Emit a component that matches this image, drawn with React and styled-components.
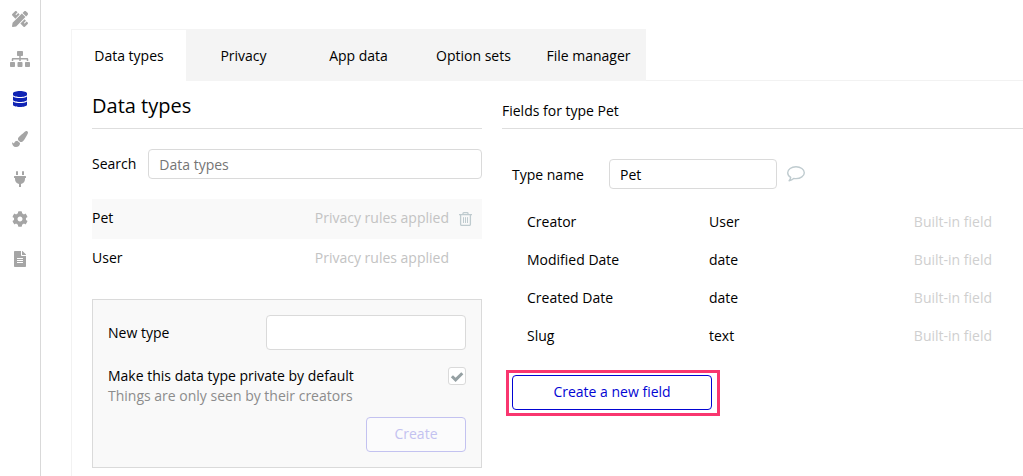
import React, { useState } from "react";
import styled, { createGlobalStyle } from "styled-components";
import { FaPencilRuler, FaSitemap, FaDatabase, FaPaintBrush, FaPlug, FaCog, FaFileAlt } from "react-icons/fa";

const GlobalStyle = createGlobalStyle`
  *, *::before, *::after { box-sizing: border-box; }
  body {
    margin: 0;
    background: #fff;
    color: #000;
    font: 14px/20px "Open Sans", "Noto Sans", sans-serif;
  }
  button, input { font: inherit; color: inherit; }
`;

const Page = styled.div`
  display: flex;
  min-height: 100vh;
  overflow-x: hidden;
`;

const Sidebar = styled.nav`
  display: flex;
  flex: none;
  flex-direction: column;
  width: 41px;
  border-right: 1px solid #d9d9d9;
`;

const SidebarButton = styled.button`
  display: flex;
  align-items: center;
  justify-content: center;
  height: 40px;
  padding: 0 0 2px;
  border: 0;
  background: none;
  color: ${(p) => (p.$active ? "#0f23b4" : "#a5a5a5")};
  cursor: pointer;

  svg {
    width: ${(p) => (p.$wide ? "20px" : "16px")};
    height: 16px;
  }
`;

const Main = styled.main`
  display: flex;
  flex: 1;
  flex-direction: column;
  min-width: 0;
  padding: 29px 0 0 30px;
`;

const TabBar = styled.div`
  display: flex;
  border-bottom: 1px solid #f2f2f2;
`;

const Tab = styled.button`
  width: 115px;
  height: 52px;
  margin-bottom: -1px;
  padding: 0;
  border: 1px solid #f4f4f4;
  border-width: 1px 0 0 ${(p) => (p.$active ? "1px" : "0")};
  background: ${(p) => (p.$active ? "#fff" : "#f4f4f4")};
  white-space: nowrap;
  cursor: pointer;
`;

const Panel = styled.div`
  display: grid;
  flex: 1;
  grid-template-columns: 390px minmax(0, 1fr);
  column-gap: 20px;
  padding-left: 20px;
  border-left: 1px solid #f2f2f2;
`;

const Column = styled.section`
  display: flex;
  flex-direction: column;
  padding-bottom: 8px;
`;

const ColumnHeader = styled.header`
  display: flex;
  align-items: flex-end;
  height: 48px;
  padding-bottom: ${(p) => (p.$large ? "8px" : "7px")};
  border-bottom: 1px solid #dedede;
`;

const Title = styled.h1`
  margin: 0;
  font-size: 20px;
  line-height: 28px;
  font-weight: 400;
`;

const Subtitle = styled.h2`
  margin: 0;
  font-size: 14px;
  line-height: 20px;
  font-weight: 400;
`;

const TextInput = styled.input`
  flex: ${(p) => (p.$width ? "none" : "1")};
  width: ${(p) => p.$width || "auto"};
  min-width: 0;
  height: ${(p) => (p.$tall ? "35px" : "30px")};
  padding: 0 10px;
  border: 1px solid #dadada;
  border-radius: 4px;
  background: #fff;
  outline: none;

  &::placeholder { color: #757575; opacity: 1; }
`;

const SearchRow = styled.div`
  display: flex;
  align-items: center;
  gap: 12px;
  margin: 20px 0;
`;

const TypeRow = styled.div`
  display: flex;
  align-items: center;
  height: 40px;
  padding: 0 10px 2px 0;
  background: ${(p) => (p.$selected ? "#f9f9f9" : "#fff")};
`;

const PrivacyNote = styled.span`
  margin-left: auto;
  margin-right: 10px;
  color: #c3c3c3;
`;

const IconButton = styled.button`
  display: flex;
  width: 13px;
  padding: 2px 0 0;
  border: 0;
  background: none;
  color: #bfcbcf;
  cursor: pointer;
  visibility: ${(p) => (p.$hidden ? "hidden" : "visible")};
`;

const NewTypeCard = styled.form`
  display: flex;
  flex-direction: column;
  margin-top: 20px;
  padding: 15px;
  border: 1px solid #dadada;
  background: #f9f9f9;
`;

const FormRow = styled.div`
  display: flex;
  align-items: ${(p) => (p.$top ? "flex-start" : "center")};
  justify-content: space-between;
  margin-top: ${(p) => (p.$top ? "16px" : "0")};
`;

const Hint = styled.span`
  display: block;
  color: #8c8c8c;
`;

const CheckHolder = styled.span`
  position: relative;
  display: flex;
  margin-top: 1px;

  svg {
    position: absolute;
    inset: 0;
    pointer-events: none;
  }
`;

const Checkbox = styled.input`
  width: 18px;
  height: 18px;
  margin: 0;
  appearance: none;
  border: 1px solid #dadada;
  border-radius: 3px;
  background: #fff;
`;

const OutlineButton = styled.button`
  width: ${(p) => p.$width};
  height: 35px;
  padding: 0 0 2px;
  border: 1px solid #0205d3;
  border-radius: 4px;
  background: #fff;
  color: #0205d3;
  cursor: pointer;

  &:disabled {
    align-self: flex-end;
    margin-top: 11px;
    border-color: #c3c2f0;
    background: #fbfbfc;
    color: #c3c2f0;
  }
`;

const TypeNameRow = styled.div`
  display: flex;
  align-items: center;
  gap: 10px;
  margin-top: 30px;
  padding-left: 10px;
`;

const TypeNameLabel = styled.label`
  width: 87px;
  padding-top: 2px;
`;

const CommentButton = styled(IconButton)`
  width: 18px;
  padding: 0;
`;

const FieldTable = styled.table`
  width: calc(100% - 56px);
  margin: 14px 31px 0 25px;
  border-collapse: collapse;
`;

const Cell = styled.td`
  width: ${(p) => p.$width || "auto"};
  height: 38px;
  padding: 0;
  color: ${(p) => (p.$muted ? "#cfcfcf" : "#000")};
  text-align: ${(p) => (p.$muted ? "right" : "left")};
`;

const Highlight = styled.div`
  display: flex;
  align-self: flex-start;
  margin: 15px 0 0 4px;
  padding: 2px 5px 3px 3px;
  border: 3px solid #f9366f;
`;

const TrashIcon = () => (
  <svg width="13" height="14" viewBox="0 0 13 14" fill="none" stroke="currentColor" aria-hidden="true">
    <path d="M0 2.6h13M4 2.4V1.5Q4 .7 4.800.7h3.400q.8 0 .8.8v.9M1.600 2.700v9.500q0 1.200 1.200 1.200h7.400q1.200 0 1.200-1.200V2.700" strokeWidth="1.300" />
    <path d="M4.500 5.200v5.800M6.500 5.200v5.800M8.500 5.200v5.800" />
  </svg>
);

const CommentIcon = () => (
  <svg width="18" height="16" viewBox="0 0 18 16" fill="none" stroke="currentColor" strokeWidth="1.4" strokeLinejoin="round" aria-hidden="true">
    <path d="M9 .8c4.600 0 8.300 2.600 8.300 5.900s-3.700 5.900-8.300 5.900c-.8 0-1.600-.1-2.300-.2-1.300 1.300-2.800 2-4.600 2.300 1-1 1.500-2 1.600-3.300C1.900 10.300.7 8.600.7 6.700.7 3.400 4.400.8 9 .8z" />
  </svg>
);

const CheckIcon = () => (
  <svg width="18" height="18" viewBox="0 0 18 18" fill="none" stroke="#95a0a3" strokeWidth="3" aria-hidden="true">
    <path d="M3.900 9.200l3.700 3.700 6.700-6.700" />
  </svg>
);

const NAV = [
  { label: "Design", Icon: FaPencilRuler },
  { label: "Workflow", Icon: FaSitemap, wide: true },
  { label: "Data", Icon: FaDatabase, active: true },
  { label: "Styles", Icon: FaPaintBrush },
  { label: "Plugins", Icon: FaPlug },
  { label: "Settings", Icon: FaCog },
  { label: "Logs", Icon: FaFileAlt },
];

const TABS = ["Data types", "Privacy", "App data", "Option sets", "File manager"];

const FIELDS = [
  ["Creator", "User"],
  ["Modified Date", "date"],
  ["Created Date", "date"],
  ["Slug", "text"],
];

export default function App() {
  const [typeName, setTypeName] = useState("Pet");

  return (
    <>
      <GlobalStyle />
      <Page>
        <Sidebar>
          {NAV.map(({ label, Icon, active, wide }) => (
            <SidebarButton key={label} type="button" aria-label={label} $active={active} $wide={wide}>
              <Icon />
            </SidebarButton>
          ))}
        </Sidebar>
        <Main>
          <TabBar role="tablist">
            {TABS.map((tab, i) => (
              <Tab key={tab} type="button" role="tab" aria-selected={i === 0} $active={i === 0}>
                {tab}
              </Tab>
            ))}
          </TabBar>
          <Panel>
            <Column>
              <ColumnHeader $large>
                <Title>Data types</Title>
              </ColumnHeader>
              <SearchRow>
                <label htmlFor="search">Search</label>
                <TextInput id="search" placeholder="Data types" />
              </SearchRow>
              {["Pet", "User"].map((name, i) => (
                <TypeRow key={name} $selected={i === 0}>
                  {name}
                  <PrivacyNote>Privacy rules applied</PrivacyNote>
                  <IconButton type="button" aria-label={`Delete ${name}`} $hidden={i !== 0}>
                    <TrashIcon />
                  </IconButton>
                </TypeRow>
              ))}
              <NewTypeCard>
                <FormRow>
                  <label htmlFor="new-type">New type</label>
                  <TextInput id="new-type" $width="200px" $tall />
                </FormRow>
                <FormRow $top>
                  <label htmlFor="private">
                    Make this data type private by default
                    <Hint>Things are only seen by their creators</Hint>
                  </label>
                  <CheckHolder>
                    <Checkbox id="private" type="checkbox" defaultChecked />
                    <CheckIcon />
                  </CheckHolder>
                </FormRow>
                <OutlineButton type="submit" $width="100px" disabled>
                  Create
                </OutlineButton>
              </NewTypeCard>
            </Column>
            <Column>
              <ColumnHeader>
                <Subtitle>Fields for type Pet</Subtitle>
              </ColumnHeader>
              <TypeNameRow>
                <TypeNameLabel htmlFor="type-name">Type name</TypeNameLabel>
                <TextInput
                  id="type-name"
                  $width="168px"
                  value={typeName}
                  onChange={(e) => setTypeName(e.target.value)}
                />
                <CommentButton type="button" aria-label="Add a note">
                  <CommentIcon />
                </CommentButton>
              </TypeNameRow>
              <FieldTable>
                <tbody>
                  {FIELDS.map(([name, type]) => (
                    <tr key={name}>
                      <Cell $width="182px">{name}</Cell>
                      <Cell>{type}</Cell>
                      <Cell $muted>Built-in field</Cell>
                    </tr>
                  ))}
                </tbody>
              </FieldTable>
              <Highlight>
                <OutlineButton type="button" $width="200px">
                  Create a new field
                </OutlineButton>
              </Highlight>
            </Column>
          </Panel>
        </Main>
      </Page>
    </>
  );
}
